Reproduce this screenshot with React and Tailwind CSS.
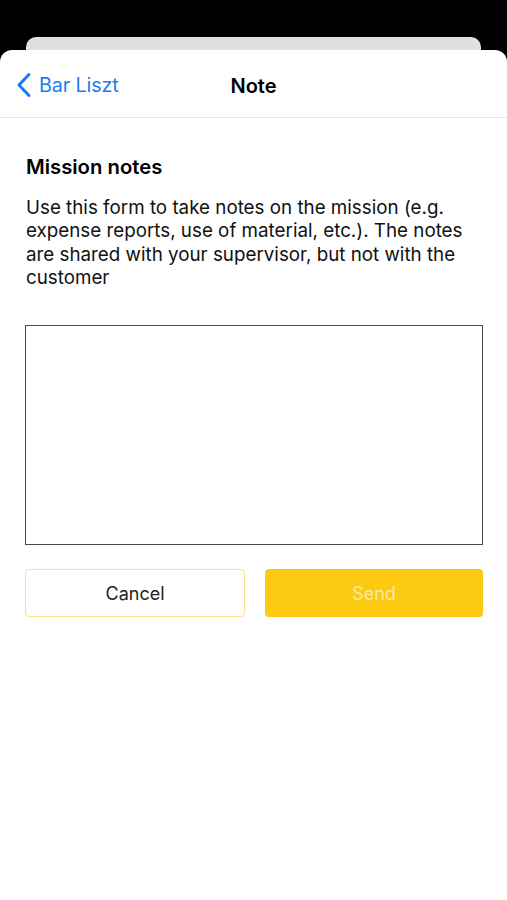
export default function App() {
  return (
    <div className="w-[507px] h-[900px] bg-black flex flex-col overflow-hidden" style={{ fontFamily: 'Inter, "Liberation Sans", sans-serif' }}>
      <div className="h-[37px] shrink-0" />
      <div className="mx-[26px] h-[20px] shrink-0 -mb-[7px] rounded-t-[10px] bg-[#e0e0e0]" />
      <div className="flex-1 bg-white rounded-t-[12px] flex flex-col relative">
        <div className="h-[68px] pt-[4px] flex items-center relative border-b border-[#e6e6e6]">
          <div className="flex items-center pl-[16px] text-[#1a7cf5]">
            <svg width="16" height="26" viewBox="0 0 16 26" fill="none">
              <path d="M13 2.5 L3 13 L13 23.5" stroke="#1a7cf5" strokeWidth="3" strokeLinecap="round" strokeLinejoin="round" />
            </svg>
            <span className="ml-[7px] text-[19.7px] tracking-[-0.1px]">Bar Liszt</span>
          </div>
          <div className="absolute inset-x-0 text-center text-[20px] font-semibold text-black pointer-events-none">Note</div>
        </div>
        <div className="px-[26px] pt-[36px]">
          <h2 className="text-[20.3px] font-semibold text-black leading-[26px]">Mission notes</h2>
          <p className="mt-[16px] text-[18.8px] leading-[23.3px] text-[#111]">
            Use this form to take notes on the mission (e.g. expense reports, use of material, etc.). The notes are shared with your supervisor, but not with the customer
          </p>
        </div>
        <div className="pl-[25px] pr-[24px] mt-[36px]">
          <textarea className="block w-full h-[220px] border-[1.5px] border-[#4a4a4a] resize-none outline-none" />
          <div className="mt-[24px] flex gap-[20px]">
            <button className="flex-1 h-[48px] rounded-[4px] border-[1.5px] border-[#fbe288] bg-white text-[18px] text-[#222]">Cancel</button>
            <button className="flex-1 h-[48px] rounded-[4px] bg-[#fcca10] text-[18px] text-[#fde9a6]">Send</button>
          </div>
        </div>
      </div>
    </div>
  );
}
